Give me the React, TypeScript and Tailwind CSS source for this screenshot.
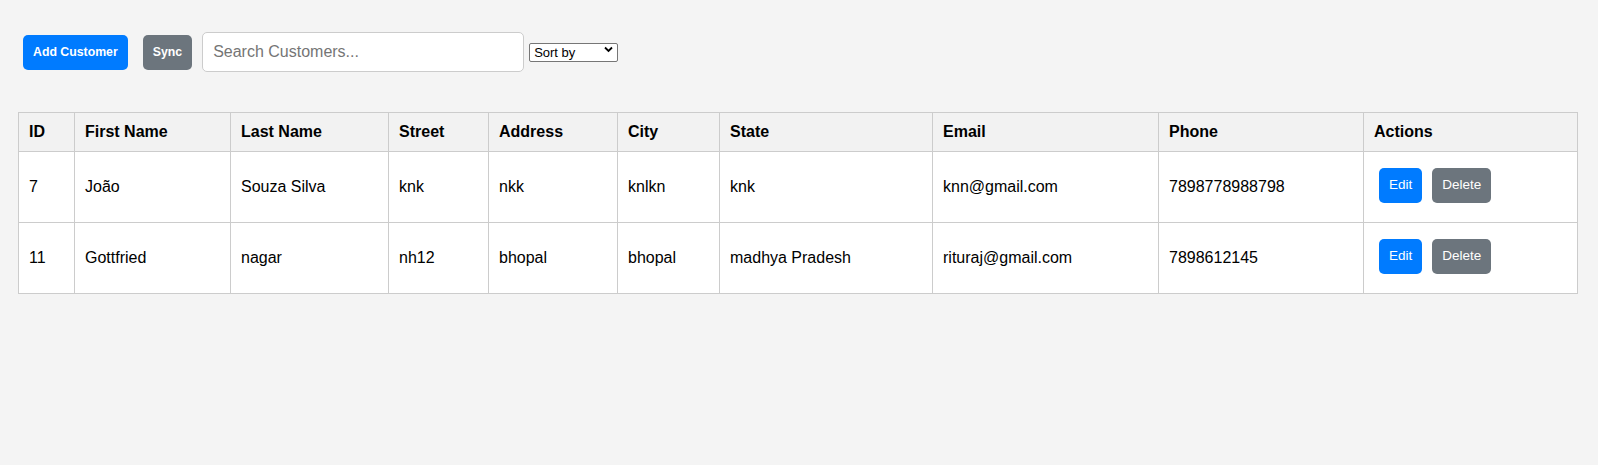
import { useState } from 'react';

type Customer = {
  id: number;
  firstName: string;
  lastName: string;
  street: string;
  address: string;
  city: string;
  state: string;
  email: string;
  phone: string;
};

const CUSTOMERS: Customer[] = [
  {
    id: 7,
    firstName: 'João',
    lastName: 'Souza Silva',
    street: 'knk',
    address: 'nkk',
    city: 'knlkn',
    state: 'knk',
    email: 'knn@gmail.com',
    phone: '7898778988798',
  },
  {
    id: 11,
    firstName: 'Gottfried',
    lastName: 'nagar',
    street: 'nh12',
    address: 'bhopal',
    city: 'bhopal',
    state: 'madhya Pradesh',
    email: 'rituraj@gmail.com',
    phone: '7898612145',
  },
];

const COLUMNS = [
  { label: 'ID', width: 'w-[56px]' },
  { label: 'First Name', width: 'w-[156px]' },
  { label: 'Last Name', width: 'w-[158px]' },
  { label: 'Street', width: 'w-[100px]' },
  { label: 'Address', width: 'w-[129px]' },
  { label: 'City', width: 'w-[102px]' },
  { label: 'State', width: 'w-[213px]' },
  { label: 'Email', width: 'w-[226px]' },
  { label: 'Phone', width: 'w-[205px]' },
  { label: 'Actions', width: 'w-[214px]' },
];

const cell = 'border border-[#cccccc] px-[10px] text-left align-middle';

export default function App() {
  const [query, setQuery] = useState('');
  const [sort, setSort] = useState('');

  const rows = CUSTOMERS.filter((c) =>
    [c.firstName, c.lastName, c.email, c.city].join(' ').toLowerCase().includes(query.toLowerCase())
  );

  return (
    <div className="min-h-screen bg-[#f4f4f4] px-[18px] pt-[32px] font-['Liberation_Sans',Arial,sans-serif] text-black">
      {/* toolbar */}
      <div className="flex h-[40px] items-center pl-[5px]">
        <button className="h-[35px] rounded-[5px] bg-[#007bff] px-[10px] text-[12.3px] font-bold text-white">
          Add Customer
        </button>
        <button className="ml-[15px] h-[35px] rounded-[5px] bg-[#6c757d] px-[10px] text-[12.3px] font-bold text-white">
          Sync
        </button>
        <input
          value={query}
          onChange={(e) => setQuery(e.target.value)}
          placeholder="Search Customers..."
          className="ml-[10px] h-[40px] w-[322px] rounded-[5px] border border-[#cccccc] bg-white px-[10px] text-[16px] placeholder:text-[#757575] focus:outline-none"
        />
        <div className="relative ml-[5px]">
          <select
            value={sort}
            onChange={(e) => setSort(e.target.value)}
            className="h-[19px] w-[89px] appearance-none rounded-[2px] border border-[#767676] bg-white pl-[4px] text-[13px] leading-[17px] text-black"
          >
            <option value="">Sort by</option>
            <option value="firstName">First Name</option>
            <option value="lastName">Last Name</option>
            <option value="email">Email</option>
          </select>
          <svg
            className="pointer-events-none absolute right-[5px] top-[6px]"
            width="9"
            height="7"
            viewBox="0 0 9 7"
          >
            <path d="M1 1.5 L4.5 5 L8 1.5" fill="none" stroke="#000" strokeWidth="1.8" />
          </svg>
        </div>
      </div>

      {/* customers table */}
      <table className="mt-[40px] w-[1560px] table-fixed border-collapse text-[16px]">
        <colgroup>
          {COLUMNS.map((col) => (
            <col key={col.label} className={col.width} />
          ))}
        </colgroup>
        <thead>
          <tr className="bg-[#f2f2f2]">
            {COLUMNS.map((col) => (
              <th key={col.label} className={`${cell} h-[39px] py-0 font-bold leading-[18px]`}>
                {col.label}
              </th>
            ))}
          </tr>
        </thead>
        <tbody className="bg-white">
          {rows.map((c) => (
            <tr key={c.id}>
              <td className={`${cell} h-[71px]`}>{c.id}</td>
              <td className={cell}>{c.firstName}</td>
              <td className={cell}>{c.lastName}</td>
              <td className={cell}>{c.street}</td>
              <td className={cell}>{c.address}</td>
              <td className={cell}>{c.city}</td>
              <td className={cell}>{c.state}</td>
              <td className={cell}>{c.email}</td>
              <td className={cell}>{c.phone}</td>
              <td className={cell}>
                <div className="mb-[4px] flex gap-[10px] pl-[5px]">
                  <button className="h-[35px] rounded-[5px] bg-[#007bff] px-[10px] text-[13.5px] text-white">
                    Edit
                  </button>
                  <button className="h-[35px] rounded-[5px] bg-[#6c757d] px-[10px] text-[13.5px] text-white">
                    Delete
                  </button>
                </div>
              </td>
            </tr>
          ))}
        </tbody>
      </table>
    </div>
  );
}
